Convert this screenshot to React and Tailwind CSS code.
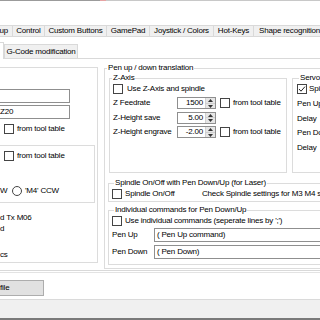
import React from "react";

function Check({ checked }) {
  return (
    <span className="w-[10px] h-[10px] border border-[#444] bg-white shrink-0 flex items-center justify-center">
      {checked && (
        <svg width="8" height="8" viewBox="0 0 8 8">
          <path d="M1 4 L3 6.2 L7 1.6" stroke="#222" strokeWidth="1" fill="none" />
        </svg>
      )}
    </span>
  );
}

function Radio() {
  return <span className="w-[10px] h-[10px] rounded-full border border-[#444] bg-white shrink-0" />;
}

function Spin({ v }) {
  return (
    <div className="flex items-stretch w-[39px] h-[12px] border border-[#8f8f8f] bg-white shrink-0">
      <div className="flex-1 flex items-center justify-end pr-[2px]">{v}</div>
      <div className="w-[10px] flex flex-col border-l border-[#d0d0d0]">
        <div className="flex-1 bg-[#e6e6e6] flex items-center justify-center border-b border-[#cfcfcf]">
          <svg width="5" height="3" viewBox="0 0 5 3">
            <path d="M0 3 L2.5 0 L5 3Z" fill="#333" />
          </svg>
        </div>
        <div className="flex-1 bg-[#e6e6e6] flex items-center justify-center">
          <svg width="5" height="3" viewBox="0 0 5 3">
            <path d="M0 0 L2.5 3 L5 0Z" fill="#333" />
          </svg>
        </div>
      </div>
    </div>
  );
}

function Tab({ w, children, first, start }) {
  return (
    <div
      className={
        "h-full shrink-0 flex items-center whitespace-nowrap bg-[#f0f0f0] border-t border-r border-b border-[#d9d9d9] " +
        (first ? "border-l " : "") +
        (start ? "justify-start pl-[5px]" : "justify-center")
      }
      style={{ width: w }}
    >
      {children}
    </div>
  );
}

export default function App() {
  return (
    <div className="w-[320px] h-[320px] overflow-hidden bg-white flex flex-col font-['Liberation_Sans',Arial,sans-serif] text-[8px] tracking-[-0.2px] text-black leading-[10px] whitespace-nowrap">
      {/* top edge */}
      <div className="h-px shrink-0 flex">
        <div className="w-[100px] bg-[#9b9b9b]" />
        <div className="w-[6px] bg-[#e6a3a3]" />
        <div className="flex-1 bg-[#c8c8c8]" />
      </div>
      <div className="h-[24px] shrink-0" />

      {/* tab row 1 */}
      <div className="h-[12px] shrink-0 flex ml-[-17px]">
        <Tab w={30} first>Setup</Tab>
        <Tab w={32}>Control</Tab>
        <Tab w={62}>Custom Buttons</Tab>
        <Tab w={43}>GamePad</Tab>
        <Tab w={64}>Joystick / Colors</Tab>
        <Tab w={40}>Hot-Keys</Tab>
        <Tab w={85} start>Shape recognition</Tab>
      </div>
      <div className="h-[5px] shrink-0" />

      {/* tab row 2 */}
      <div className="h-[16px] shrink-0 flex items-end ml-[-17px]">
        <div className="w-[21px] h-[17px] -mb-px relative z-10 bg-white border-t border-r border-[#d9d9d9] self-start" />
        <div className="w-[74px] h-[14px] bg-[#f0f0f0] border-t border-l border-r border-[#d9d9d9] flex items-center justify-center">
          G-Code modification
        </div>
      </div>

      {/* tab page */}
      <div className="h-[213px] shrink-0 border-t border-b border-[#d9d9d9] bg-white flex items-start overflow-hidden">
        {/* left group (cut) */}
        <div className="w-[98px] h-[196px] shrink-0 mt-[8px] border-t border-r border-b border-[#dcdcdc] flex flex-col">
          <div className="mt-[21px] h-[14px] w-[70px] border-t border-r border-b border-[#8f8f8f]" />
          <div className="mt-[2px] h-[14px] w-[70px] border-t border-r border-b border-[#8f8f8f] flex items-center">
            <span>Z20</span>
          </div>
          <div className="mt-[5px] h-[10px] pl-[4px] flex items-center gap-[3px]">
            <Check />
            <span>from tool table</span>
          </div>
          <div className="mt-[11px] w-[95px] h-[58px] border-t border-r border-b border-[#dcdcdc] flex flex-col">
            <div className="mt-[5px] h-[10px] pl-[4px] flex items-center gap-[3px]">
              <Check />
              <span>from tool table</span>
            </div>
            <div className="mt-[25px] h-[10px] flex items-center">
              <span className="w-[12px]">W</span>
              <Radio />
              <span className="ml-[3px]">'M4' CCW</span>
            </div>
          </div>
          <div className="mt-[9px] h-[11px] flex items-center">d Tx M06</div>
          <div className="h-[11px] flex items-center">d</div>
          <div className="mt-[15px] h-[11px] flex items-center">cs</div>
        </div>

        {/* Pen up / down translation */}
        <fieldset className="ml-[6px] mt-[4px] w-[226px] shrink-0 border border-[#dcdcdc] pb-[3px]">
          <legend className="ml-[2px] px-[1px] leading-[10px]">Pen up / down translation</legend>
          <div className="flex pl-[4px]">
            <fieldset className="w-[178px] h-[100px] shrink-0 border border-[#dcdcdc] pl-[3px]">
              <legend className="px-[1px] leading-[10px] -ml-[1px]">Z-Axis</legend>
              <div className="mt-[1px] h-[10px] flex items-center gap-[4px]">
                <Check />
                <span>Use Z-Axis and spindle</span>
              </div>
              <div className="mt-[2px] flex flex-col">
                <div className="h-[14.5px] flex items-center">
                  <span className="w-[64px]">Z Feedrate</span>
                  <Spin v="1500" />
                  <span className="ml-[4px]"><Check /></span>
                  <span className="ml-[3px]">from tool table</span>
                </div>
                <div className="h-[14.5px] flex items-center">
                  <span className="w-[64px]">Z-Height save</span>
                  <Spin v="5.00" />
                </div>
                <div className="h-[14.5px] flex items-center">
                  <span className="w-[64px]">Z-Height engrave</span>
                  <Spin v="-2.00" />
                  <span className="ml-[4px]"><Check /></span>
                  <span className="ml-[3px]">from tool table</span>
                </div>
              </div>
            </fieldset>
            <fieldset className="ml-[5px] w-[60px] h-[100px] shrink-0 border border-[#dcdcdc] pl-[4px]">
              <legend className="ml-[2px] px-[1px] leading-[10px]">Servo</legend>
              <div className="mt-[1px] h-[10px] flex items-center gap-[2px]">
                <Check checked />
                <span>Spindle</span>
              </div>
              <div className="mt-[3px] flex flex-col">
                <div className="h-[14.5px] flex items-center">Pen Up</div>
                <div className="h-[14.5px] flex items-center">Delay</div>
                <div className="h-[14.5px] flex items-center">Pen Down</div>
                <div className="h-[14.5px] flex items-center">Delay</div>
              </div>
            </fieldset>
          </div>

          <fieldset className="ml-[3px] mt-[5px] w-[230px] border border-[#dcdcdc] pl-[3px] pb-[2px]">
            <legend className="ml-[2px] px-[1px] leading-[10px]">Spindle On/Off with Pen Down/Up (for Laser)</legend>
            <div className="mt-[1px] h-[10px] flex items-center">
              <Check />
              <span className="ml-[3px] w-[77px]">Spindle On/Off</span>
              <span>Check Spindle settings for M3 M4 spindle</span>
            </div>
          </fieldset>

          <fieldset className="ml-[3px] mt-[3px] w-[230px] border border-[#dcdcdc] pl-[3px] pb-[5px]">
            <legend className="ml-[2px] px-[1px] leading-[10px]">Individual commands for Pen Down/Up</legend>
            <div className="mt-[1px] h-[10px] flex items-center">
              <Check />
              <span className="ml-[3px]">Use individual commands (seperate lines by ';')</span>
            </div>
            <div className="mt-[2px] h-[14px] flex items-center">
              <span className="w-[42px]">Pen Up</span>
              <div className="flex-1 h-[14px] border border-[#8f8f8f] flex items-center pl-[2px]">( Pen Up command)</div>
            </div>
            <div className="mt-[3px] h-[14px] flex items-center">
              <span className="w-[42px]">Pen Down</span>
              <div className="flex-1 h-[14px] border border-[#8f8f8f] flex items-center pl-[2px]">( Pen Down)</div>
            </div>
          </fieldset>
        </fieldset>
      </div>

      <div className="mt-[1px] h-px shrink-0 bg-[#e3e3e3]" />
      <div className="mt-[7px] h-[16px] w-[44px] shrink-0 bg-[#e1e1e1] border-t border-r border-b border-[#adadad] flex items-center">
        <span>file</span>
      </div>
      <div className="mt-[3px] h-px shrink-0 bg-[#dadada]" />
      <div className="h-[18px] shrink-0 bg-[#f0f0f0]" />
      <div className="h-[2px] shrink-0 bg-[#7a7a7a]" />
    </div>
  );
}
